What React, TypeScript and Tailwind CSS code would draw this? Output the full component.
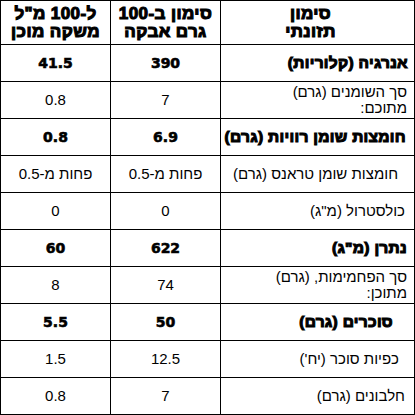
import React from "react";

type Row = { label: React.ReactNode; a: string; b: string; bold?: boolean; pr: string };

const rows: Row[] = [
  { label: "אנרגיה (קלוריות)", a: "390", b: "41.5", bold: true, pr: "pr-[6px]" },
  { label: <>סך השומנים (גרם)<br />מתוכם:</>, a: "7", b: "0.8", pr: "pr-[7px]" },
  { label: "חומצות שומן רוויות (גרם)", a: "6.9", b: "0.8", bold: true, pr: "pr-[8px]" },
  { label: "חומצות שומן טראנס (גרם)", a: "פחות מ-0.5", b: "פחות מ-0.5", pr: "pr-[16px]" },
  { label: "כולסטרול (מ\"ג)", a: "0", b: "0", pr: "pr-[9px]" },
  { label: "נתרן (מ\"ג)", a: "622", b: "60", bold: true, pr: "pr-[7px]" },
  { label: <>סך הפחמימות, (גרם)<br />מתוכן:</>, a: "74", b: "8", pr: "pr-[7px]" },
  { label: "סוכרים (גרם)", a: "50", b: "5.5", bold: true, pr: "pr-[21px]" },
  { label: "כפיות סוכר (יח')", a: "12.5", b: "1.5", pr: "pr-[15px]" },
  { label: "חלבונים (גרם)", a: "7", b: "0.8", pr: "pr-[9px]" },
];

const heavyNum = "font-['DejaVu_Sans',sans-serif] font-bold [-webkit-text-stroke:0.6px_#000]";
const heavyHeb = "font-['Liberation_Sans',sans-serif] font-bold [-webkit-text-stroke:1.1px_#000]";
const reg = "font-['Liberation_Sans',sans-serif]";

export default function App() {
  return (
    <div dir="rtl" className="w-[415px] h-[415px] bg-white">
      <div className="grid grid-cols-[193px_109px_109px] grid-rows-[43px_repeat(10,36px)] gap-px bg-black p-px text-black">
        <div className={`bg-white flex items-center justify-center pr-[14px] text-center text-[17px] leading-[18px] tracking-[0.4px] ${heavyHeb}`}>
          סימון
          <br />
          תזונתי
        </div>
        <div className={`bg-white flex items-center justify-center text-center text-[17px] leading-[18px] tracking-[0.4px] ${heavyHeb}`}>
          סימון ב-100
          <br />
          גרם אבקה
        </div>
        <div className={`bg-white flex items-center justify-center text-center text-[17px] leading-[18px] tracking-[0.4px] ${heavyHeb}`}>
          ל-100 מ"ל
          <br />
          משקה מוכן
        </div>
        {rows.map((r, i) => (
          <React.Fragment key={i}>
            <div
              className={`bg-white flex items-center ${r.pr} ${r.bold ? `text-[15.5px] tracking-[0.3px] ${heavyHeb}` : `text-[15px] leading-[16px] ${reg}`}`}
            >
              <div>{r.label}</div>
            </div>
            <div
              className={`bg-white flex items-center justify-center ${r.bold ? `text-[14px] ${heavyNum}` : `text-[15px] ${reg}`}`}
            >
              {r.a}
            </div>
            <div
              className={`bg-white flex items-center justify-center ${r.bold ? `text-[14px] ${heavyNum}` : `text-[15px] ${reg}`}`}
            >
              {r.b}
            </div>
          </React.Fragment>
        ))}
      </div>
    </div>
  );
}
